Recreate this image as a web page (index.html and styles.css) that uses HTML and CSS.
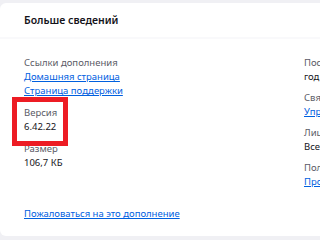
FILE: index.html
```html
<!DOCTYPE html>
<html lang="ru">
<head>
<meta charset="utf-8">
<link rel="stylesheet" href="styles.css">
</head>
<body>
<section class="card">
  <header class="card-header">Больше сведений</header>
  <div class="card-body">
    <div class="col left">
      <dl class="group">
        <dt class="label">Ссылки дополнения</dt>
        <dd class="value"><a href="#">Домашняя страница</a></dd>
        <dd class="value"><a href="#">Страница поддержки</a></dd>
      </dl>
      <dl class="group version">
        <dt class="label">Версия</dt>
        <dd class="value">6.42.22</dd>
      </dl>
      <dl class="group">
        <dt class="label">Размер</dt>
        <dd class="value">106,7 КБ</dd>
      </dl>
      <a class="report" href="#">Пожаловаться на это дополнение</a>
    </div>
    <div class="col right">
      <dl class="group">
        <dt class="label">Последнее обновление</dt>
        <dd class="value">год назад</dd>
      </dl>
      <dl class="group">
        <dt class="label">Связанные категории</dt>
        <dd class="value"><a href="#">Управление вкладками</a></dd>
      </dl>
      <dl class="group">
        <dt class="label">Лицензия</dt>
        <dd class="value">Все права защищены</dd>
      </dl>
      <dl class="group">
        <dt class="label">Политика приватности</dt>
        <dd class="value"><a href="#">Прочитать политику приватности</a></dd>
      </dl>
    </div>
  </div>
</section>
</body>
</html>
```
FILE: styles.css
```css
html, body {
  margin: 0;
  padding: 0;
  background: #f0f0f4;
  overflow: hidden;
  width: 320px;
  height: 240px;
}
body {
  font-family: "Noto Sans", "Liberation Sans", sans-serif;
  color: #15141a;
  font-size: 9.5px;
  line-height: 14px;
}
.card {
  margin-top: 3px;
  width: 320px;
  height: 233px;
  background: #fff;
  border-radius: 6px 0 0 6px;
  display: flex;
  flex-direction: column;
  overflow: hidden;
}
.card-header {
  height: 34px;
  padding-left: 24px;
  display: flex;
  align-items: center;
  font-size: 10.5px;
  font-weight: 600;
  border-bottom: 2px solid #f9f9fb;
}
.card-body {
  display: flex;
  flex: 1;
  padding: 17px 0 0 24px;
}
.col {
  display: flex;
  flex-direction: column;
  white-space: nowrap;
}
.left {
  width: 280px;
  flex: none;
}
.group {
  margin: 0 0 8px;
}
.label {
  color: #5b5b66;
}
.value {
  margin: 0;
}
a {
  color: #0060df;
  text-decoration: underline;
}
.version {
  position: relative;
}
.version::after {
  content: "";
  position: absolute;
  left: -12px;
  top: -9px;
  width: 56px;
  height: 49px;
  border: 5px solid #ed1c24;
  box-sizing: border-box;
}
.report {
  margin-top: 29px;
}
.right .group {
  margin-bottom: 7px;
}
```
